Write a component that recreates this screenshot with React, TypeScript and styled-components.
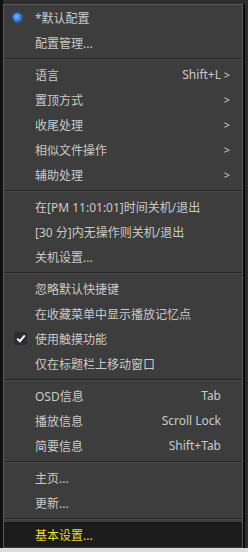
import { FC, Fragment } from 'react'
import styled, { createGlobalStyle } from 'styled-components'

const Global = createGlobalStyle`
  html, body { margin: 0; padding: 0; background: #d9d9d9; }
  body { font-family: "Noto Sans", "Noto Sans CJK SC", sans-serif; }
`

const Screen = styled.div`
  width: 248px;
  height: 552px;
  background: #dcdcdc;
  overflow: hidden;
`

const Backdrop = styled.div`
  height: 548px;
  background: #2e2e2e;
  border-left: 3px solid #111;
  padding-top: 4px;
  box-sizing: border-box;
  display: flex;
`

const Menu = styled.div`
  width: 240px;
  height: 544px;
  box-sizing: border-box;
  background: #3d3d3d;
  border: 1px solid #585858;
  border-bottom: none;
  box-shadow: 1px 0 0 #0c0c0c, 2px 0 0 #0c0c0c;
  display: flex;
  flex-direction: column;
`

const Row = styled.div<{ $active?: boolean }>`
  height: 25px;
  flex-shrink: 0;
  display: flex;
  align-items: center;
  position: relative;
  padding-left: 31px;
  padding-right: 12px;
  font-size: 12px;
  color: ${(p) => (p.$active ? '#e9d83c' : '#cacaca')};
  background: ${(p) => (p.$active ? '#1c1c1c' : 'transparent')};
  white-space: nowrap;
`

const Label = styled.span`
  flex: 1;
`

const Shortcut = styled.span`
  font-size: 12px;
  color: #cacaca;
`

const Arrow = styled.span`
  width: 9px;
  text-align: right;
  font-size: 11px;
  color: #cacaca;
`

const Separator = styled.div`
  height: 7px;
  flex-shrink: 0;
  display: flex;
  flex-direction: column;
  justify-content: center;
  &::before {
    content: '';
    height: 1px;
    background: #262626;
  }
  &::after {
    content: '';
    height: 1px;
    background: #484848;
  }
`

const Mark = styled.span<{ $kind: 'dot' | 'check' }>`
  position: absolute;
  left: ${(p) => (p.$kind === 'dot' ? 6 : 9)}px;
  top: 5px;
  width: 15px;
  height: 15px;
  display: flex;
  align-items: center;
  justify-content: center;
`

const Dot = styled.span`
  width: 9px;
  height: 9px;
  border-radius: 50%;
  background: radial-gradient(circle at 40% 40%, #78b8ff, #1f6fd6 70%);
  box-shadow: 0 0 2px 1px rgba(40, 110, 210, 0.55);
`

const CheckBox = styled.span`
  width: 13px;
  height: 13px;
  border-radius: 2px;
  background: #2c2c34;
  display: flex;
  align-items: center;
  justify-content: center;
`

type Item = {
  label: string
  shortcut?: string
  arrow?: boolean
  mark?: 'dot' | 'check'
  active?: boolean
}

const groups: Item[][] = [
  [{ label: '*默认配置', mark: 'dot' }, { label: '配置管理...' }],
  [
    { label: '语言', shortcut: 'Shift+L', arrow: true },
    { label: '置顶方式', arrow: true },
    { label: '收尾处理', arrow: true },
    { label: '相似文件操作', arrow: true },
    { label: '辅助处理', arrow: true },
  ],
  [
    { label: '在[PM 11:01:01]时间关机/退出' },
    { label: '[30 分]内无操作则关机/退出' },
    { label: '关机设置...' },
  ],
  [
    { label: '忽略默认快捷键' },
    { label: '在收藏菜单中显示播放记忆点' },
    { label: '使用触摸功能', mark: 'check' },
    { label: '仅在标题栏上移动窗口' },
  ],
  [
    { label: 'OSD信息', shortcut: 'Tab' },
    { label: '播放信息', shortcut: 'Scroll Lock' },
    { label: '简要信息', shortcut: 'Shift+Tab' },
  ],
  [{ label: '主页...' }, { label: '更新...' }],
  [{ label: '基本设置...', active: true }],
]

const MenuRow: FC<{ item: Item }> = ({ item }) => (
  <Row $active={item.active}>
    {item.mark && (
      <Mark $kind={item.mark}>
        {item.mark === 'dot' ? (
          <Dot />
        ) : (
          <CheckBox>
            <svg width="10" height="9" viewBox="0 0 10 9">
              <path d="M1.2 4.6 L3.9 7.2 L8.8 1.4" fill="none" stroke="#fff" strokeWidth="2" />
            </svg>
          </CheckBox>
        )}
      </Mark>
    )}
    <Label>{item.label}</Label>
    {item.shortcut && <Shortcut>{item.shortcut}</Shortcut>}
    <Arrow>{item.arrow ? '>' : ''}</Arrow>
  </Row>
)

export default function App() {
  return (
    <Screen>
      <Global />
      <Backdrop>
        <Menu>
          {groups.map((g, i) => (
            <Fragment key={i}>
              {i > 0 && <Separator />}
              {g.map((item) => (
                <MenuRow key={item.label} item={item} />
              ))}
            </Fragment>
          ))}
        </Menu>
      </Backdrop>
    </Screen>
  )
}
